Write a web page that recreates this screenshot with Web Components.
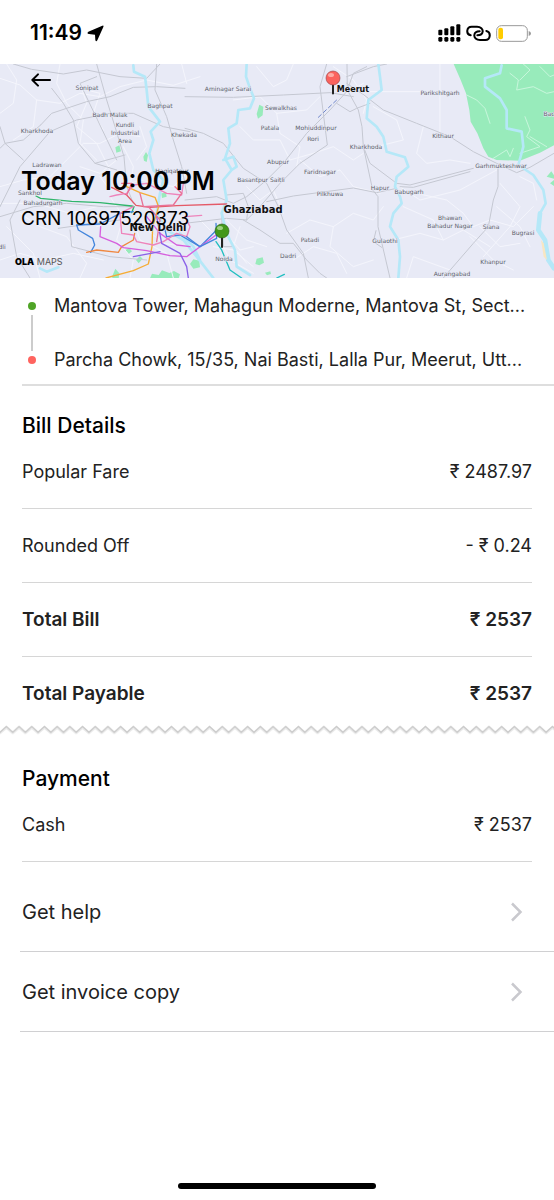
<!DOCTYPE html>
<html lang="en">
<head>
<meta charset="utf-8">
<meta name="viewport" content="width=device-width, initial-scale=1">
<title>Ride details</title>
<style>
  body {
    margin: 0;
    background: #fff;
    color: #222;
    font-family: Inter, "Liberation Sans", sans-serif;
  }
</style>
</head>
<body>
<ride-screen></ride-screen>

<script>
class StatusBar extends HTMLElement {
  constructor() {
    super();
    this.attachShadow({ mode: 'open' });
    this.shadowRoot.innerHTML = `
      <style>
        :host {
          display: flex;
          align-items: center;
          justify-content: space-between;
          height: 64px;
          padding: 2px 23px 0 30px;
          box-sizing: border-box;
          color: #000;
        }
        div { display: flex; align-items: center; gap: 5px; }
        time { font-size: 21px; line-height: 24px; font-weight: 600; }
      </style>
      <div>
        <time>11:49</time>
        <svg width="17" height="17" viewBox="0 0 51 51" aria-hidden="true">
          <path d="M46 2Q51 0 49 6L31 46Q27 52 25 45L24 29L6 27Q-2 25 4 20Z"/>
        </svg>
      </div>
      <div>
        <svg width="23" height="18" viewBox="0 0 69 54" aria-hidden="true">
          <rect x="1" y="17" width="12" height="17" rx="3"/>
          <rect x="19" y="13" width="12" height="21" rx="3"/>
          <rect x="37" y="7" width="12" height="27" rx="3"/>
          <rect x="55" y="1" width="12" height="33" rx="3"/>
          <rect x="1" y="39" width="12" height="14" rx="4"/>
          <rect x="19" y="39" width="12" height="14" rx="4"/>
          <rect x="37" y="39" width="12" height="14" rx="4"/>
          <rect x="55" y="39" width="12" height="14" rx="4"/>
        </svg>
        <svg width="25" height="17" viewBox="0 0 75 51" fill="none" stroke="#000" stroke-width="6" stroke-linecap="round" aria-hidden="true">
          <path d="M14 31C-1 28 1 5 17 5H33C44 5 51 12 50 20C49 28 42 31 34 31"/>
          <path d="M61 18C76 21 74 45 58 45H42C31 45 24 38 25 30C26 22 33 19 41 19"/>
        </svg>
        <svg width="35" height="17" viewBox="0 0 105 51" aria-hidden="true">
          <rect x="2" y="2" width="92" height="47" rx="14" fill="#fff" stroke="#999" stroke-width="3"/>
          <rect x="7" y="8" width="14" height="35" rx="6" fill="#fc0"/>
          <path d="M98 18Q105 20 105 25.500T98 33Z" fill="#999"/>
        </svg>
      </div>
    `;
  }
}
customElements.define('status-bar', StatusBar);

// [x, baseline, text]
const PLACES = [
  [87, 26, 'Sonipat'], [160, 44, 'Baghpat'], [110, 53, 'Badh Malak'],
  [125, 63, 'Kundli'], [125, 71, 'Industrial'], [125, 79, 'Area'],
  [37, 69, 'Kharkhoda'], [184, 73, 'Khekada'], [47, 103, 'Ladrawan'],
  [172, 109, 'Haqiqatpur'], [30, 131, 'Sankhol'], [43, 141, 'Bahadurgarh'],
  [228, 27, 'Aminagar Sarai'], [281, 46, 'Sewalkhas'],
  [270, 66, 'Patala'], [316, 66, 'Mohiuddinpur'], [313, 77, 'Rori'],
  [366, 85, 'Kharkhoda'], [278, 100, 'Abupur'], [320, 110, 'Faridnagar'],
  [261, 118, 'Basantpur Saitli'], [330, 132, 'Pilkhuwa'], [310, 178, 'Patadi'],
  [288, 194, 'Dadri'], [224, 197, 'Noida'], [440, 31, 'Parikshitgarh'],
  [443, 74, 'Kithaur'], [501, 104, 'Garhmukteshwar'], [380, 126, 'Hapur'],
  [409, 130, 'Babugarh'], [450, 156, 'Bhawan'], [450, 164, 'Bahadur Nagar'],
  [491, 165, 'Siana'], [523, 171, 'Bugrasi'], [385, 179, 'Gulaothi'],
  [493, 200, 'Khanpur'], [452, 212, 'Aurangabad'], [549, 52, 'Bac'], [2, 185, 'dli'],
];

class RideMap extends HTMLElement {
  constructor() {
    super();
    this.attachShadow({ mode: 'open' });
    const places = PLACES.map(([x, y, name]) => `<text x="${x}" y="${y}">${name}</text>`).join('');
    this.shadowRoot.innerHTML = `
      <style>
        :host { display: grid; color: #000; }
        .map, .info { grid-area: 1 / 1; }
        .map { display: block; width: 100%; height: auto; }
        .map path { fill: none; stroke-linejoin: round; stroke-linecap: round; }
        .map .park path { fill: #98ebbb; }
        .minor { stroke: #f4f5fc; stroke-width: 3; }
        .road { stroke: #c5c8d2; stroke-width: 3; }
        .water { stroke: #b5e8f8; stroke-width: 8; }
        .metro { stroke-width: 4; }
        .places {
          font-family: "DejaVu Sans", sans-serif;
          font-size: 6px;
          fill: #5c5f6a;
          text-anchor: middle;
          stroke: #e8eaf6;
          stroke-width: 1px;
          paint-order: stroke;
        }
        .places .city { font-size: 10px; font-weight: 700; fill: #111; }
        .places .small { font-size: 8px; }
        .info {
          display: flex;
          flex-direction: column;
          align-items: flex-start;
          padding: 0 22px 11px 21px;
          z-index: 1;
        }
        button {
          display: grid;
          place-items: center;
          width: 40px;
          height: 32px;
          padding: 0;
          border: 0;
          background: none;
          cursor: pointer;
        }
        h1 { margin: 68px 0 0; font-size: 25px; line-height: 34px; font-weight: 600; }
        p { margin: 7px 0 0; font-size: 19px; line-height: 28px; }
        .brand { margin-top: auto; margin-left: -6px; font-size: 9px; line-height: 10px; color: #555; }
        .brand b { color: #000; font-weight: 900; }
      </style>
      <svg class="map" viewBox="0 0 554 214" role="img" aria-label="Route map from Noida to Meerut">
        <rect width="554" height="214" fill="#e8eaf6"/>
        <!-- terrain and roads are drawn at three units to a pixel -->
        <g transform="scale(.33333) translate(0 -12)">
          <g class="park">
            <path d="M1361 12L1382 60L1398 100L1408 150L1412 185L1432 220L1450 265L1465 290L1490 300L1560 302L1620 278L1662 256V12Z"/>
            <path d="M346 262l12-6 5 18-14 4zM430 290l8-14 6 10-4 20-8-4zM770 162l8-28 12 6-2 26-14 10zM376 570l12-6 8 10-10 8zM408 600l12-12 8 8-12 14zM336 650l10-24 12 14-2 16h-18zM450 655l6-14 20 4 10-14 22 8 14-6 18 10-4 12zM570 612l10-14 18 4 2 20-20 4zM770 596l18-4 4 16-14 8-12-4zM795 638l16-4 2 8-12 4zM484 400l14-2 2 12-14 4zM1640 350l14-16 8 12v10zM1650 370l12-10v18z"/>
          </g>
          <g class="minor">
            <path d="M0 55L60 75L110 120L180 130L240 100L300 110L360 80L440 60L520 76L600 50"/>
            <path d="M20 12L50 60L40 130L0 160M110 120L100 200L40 240M180 12L170 70L200 130L250 180L240 250L290 300"/>
            <path d="M0 380L70 360L150 350L200 300L250 250L300 250L360 220L420 230M60 460L120 500L200 530L260 610L240 654"/>
            <path d="M120 654L100 580L20 500M0 600L60 580L130 600L220 580L310 600M0 430L110 430L210 460L290 440"/>
            <path d="M240 70L260 130L230 200L290 250L330 330M260 90L300 100L280 160L310 210M240 320L300 340L350 300"/>
            <path d="M290 500L350 480L430 500L490 550L560 560M330 410L370 470L350 540L400 600L390 654M400 480L420 540L500 580L520 654"/>
            <path d="M300 350L330 390L420 360L520 380L560 340M370 260L400 320L390 380M420 200L440 260L410 300M560 70L545 12"/>
            <path d="M600 480L660 540L690 600L760 640M660 500L720 570L760 560M680 480L740 540L800 560M720 500L700 560L740 610M640 560L700 570L760 620"/>
            <path d="M770 20L820 80L860 60L880 12M700 120L780 110L830 160L920 150L960 110M830 160L840 220L900 260L890 320"/>
            <path d="M720 200L760 240L840 240L870 300L940 280L1000 260L1060 300L1090 280M740 380L780 420L820 390L850 460"/>
            <path d="M900 300L960 350L1020 330L1060 380L1140 400M860 520L930 480L1000 500L1060 460L1120 480L1150 440"/>
            <path d="M880 600L940 560L1010 580L1040 640M1000 500L990 560L1060 620L1120 600M990 60L1040 100L1090 70M1000 20L1060 60L1100 120L1090 160"/>
            <path d="M1110 95L1260 95L1340 100M1320 12V220M1120 140L1190 180L1210 240L1130 260M1270 200L1250 280L1280 310L1350 300L1410 310"/>
            <path d="M1210 440L1300 480L1330 540L1390 510L1470 560M1250 400L1340 420L1390 460L1420 500L1470 480L1540 500L1600 440"/>
            <path d="M1410 530L1480 600L1540 630M1440 500L1500 560L1560 550M1450 590L1530 500L1560 440L1500 370M1220 654L1240 590L1350 630"/>
            <path d="M1560 350L1600 370L1610 420M1490 440L1560 500L1590 560M1180 540L1260 520L1330 540"/>
            <path d="M1200 380L1260 420L1380 390L1490 330"/>
          </g>
          <g class="minor" style="stroke:#c8f6dc">
            <path d="M1400 105L1430 120L1455 145L1470 190M1530 40L1555 60L1550 90L1600 80L1640 100L1662 95M1560 60L1590 30L1570 12M1620 20L1650 50L1662 45M1575 170L1590 210L1580 230L1620 260L1560 280M1480 295L1520 270L1530 290L1540 265M1590 230L1640 260"/>
          </g>
          <g class="road">
            <path d="M40 12L95 28L190 42L260 30L360 50L440 55L480 12M290 12L320 120L345 200L372 290L380 380L400 430"/>
            <path d="M122 195L155 160L260 125L330 110L400 82L470 80L555 85M122 195L70 240L15 250L0 265M155 85L190 130L220 180L235 250L285 310L350 330"/>
            <path d="M0 440L60 320L150 215L230 180L330 160L400 160L490 200L570 215"/>
            <path d="M470 12L465 90L500 170L520 240L545 320L560 400M0 200L15 250L70 300M285 310L375 285M350 300L240 70L290 50"/>
            <path d="M0 470L100 440L200 430L310 440L400 440M90 654L50 590L30 480L60 420M175 505L280 490L360 480M210 510L215 560L330 590L440 600"/>
            <path d="M555 110L700 112L850 105L990 98L1060 110M555 205L610 220L670 250L730 325L800 370L835 440L860 510L910 580L925 654"/>
            <path d="M555 420L650 410L700 430L740 410L800 360L850 310L920 220L990 150L1040 95L1060 40L1100 20M980 12L960 80L975 200L982 255L900 310L840 370L780 440L740 480L680 475L555 490"/>
            <path d="M1010 130L1050 155L1070 145L1110 130M1041 12L1042 90L1075 150L1086 200L1090 260L1118 390L1134 410L1134 500L1170 654"/>
            <path d="M1040 70L1092 105L1150 150L1250 190L1350 230L1420 275L1490 310L1550 338L1590 322L1662 280"/>
            <path d="M1090 260L1110 310L1190 370L1230 375L1420 325M1200 380L1240 382L1410 335M1190 385L1130 398L1060 384L880 408L800 425"/>
            <path d="M1494 320L1494 380L1480 420L1465 500L1420 550L1330 654M730 480L780 510L840 550L880 550L920 600L960 640L980 654M680 405L730 400L745 440L740 480"/>
            <path d="M1128 512L1120 545L1145 562M665 470L670 560L695 560M1040 50L1120 20L1160 12"/>
          </g>
          <g class="water">
            <path d="M400 16L402 35L435 50L440 90L445 140L480 185L452 215L460 240L448 280L460 330L490 360L480 400L470 460L500 510L550 540L590 590L640 654"/>
            <path d="M740 12L738 50L750 85L762 115L750 145L715 150L710 190L685 205L690 250L675 295L695 330L710 320L700 290L670 300M695 330L670 360L680 420L665 460L680 520L705 570L710 620L750 645"/>
            <path d="M1135 12L1140 50L1145 90L1105 120L1100 175L1130 200L1150 230L1160 275L1215 292L1225 320L1190 350L1185 380L1200 410L1205 430L1180 460L1170 500L1195 540L1200 590L1195 654"/>
            <path d="M1505 16L1500 40L1455 55L1455 80L1500 115L1520 150L1520 205L1565 215L1570 260L1555 315L1600 345L1630 390L1637 430L1620 460"/>
            <path d="M1620 460L1615 510L1635 540L1645 600L1662 625" stroke-width="14"/>
            <path d="M120 625L140 635L175 622M540 520L580 560L600 600" stroke-width="8"/>
          </g>
          <path d="M1623 540l8 10 10 50-10-10z" style="fill:#f8e6c2"/>
          <g class="metro">
            <path stroke="#31b56b" d="M108 408L122 415L215 424L300 428L395 438L402 440L395 458"/>
            <path stroke="#e45a68" d="M335 382L380 405L408 436L450 442L530 437L680 432"/>
            <path stroke="#f5ac35" d="M372 355L380 380L420 398L465 412L476 440L458 500L456 560L445 612L400 632L318 654"/>
            <path stroke="#4385dc" d="M230 495L235 510L278 535L284 555L272 577M230 495L300 492L360 460L400 455M490 490L500 530L540 525L600 560L655 505"/>
            <path stroke="#ef8740" d="M260 577L290 570L355 577L365 560L400 540L404 520"/>
            <path stroke="#d65fdd" d="M302 500L300 530L350 550L370 563L440 572L510 587L560 590L600 560L655 520M440 470L480 520L530 555L570 560"/>
            <path stroke="#ee84bb" d="M330 410L350 405L380 400L400 375L440 370L500 400L545 405L550 370M400 440L360 460L365 520L400 525L410 545L460 555L490 545L530 520L560 530L570 500L555 470L605 466"/>
            <path stroke="#8a61e8" d="M470 470L485 550L540 580L560 620L565 654M400 590L480 575"/>
            <path stroke="#e97196" d="M420 400L430 440L520 435L545 400L525 380M445 440L480 480L470 545M380 405L395 370L365 370"/>
            <path stroke="#4385dc" d="M648 490L650 535L600 560L560 530"/>
            <path stroke="#21bfc0" d="M648 545L665 570L690 630L725 654M830 654L853 643"/>
            <path stroke="#7087ca" stroke-width="3" stroke-dasharray="12 9" d="M955 172L1010 120"/>
          </g>
        </g>
        <g class="places">
          ${places}
          <text class="city small" x="353" y="28">Meerut</text>
          <text class="city" x="253" y="149">Ghaziabad</text>
          <text class="city" x="158" y="167">New Delhi</text>
        </g>
        <g stroke="#222">
          <path d="M333 18v11.500M222 171v12" stroke-width="2"/>
          <circle cx="333" cy="14" r="7" fill="#fb625d" stroke="#963f43" stroke-width=".6"/>
          <circle cx="222" cy="167" r="7" fill="#43981b" stroke="#245b12" stroke-width=".6"/>
        </g>
        <ellipse cx="331" cy="11" rx="3" ry="2" fill="#fdaaa3"/>
        <ellipse cx="220" cy="164" rx="3" ry="2" fill="#9ed181"/>
      </svg>
      <div class="info">
        <button type="button" aria-label="Back">
          <svg width="20" height="14" viewBox="0 0 60 42" fill="none" stroke="#000" stroke-width="6" stroke-linecap="round" stroke-linejoin="round" aria-hidden="true">
            <path d="M57 21H4M21 4L4 21L21 38"/>
          </svg>
        </button>
        <h1><slot name="time"></slot></h1>
        <p><slot name="crn"></slot></p>
        <div class="brand"><b>OLA</b> MAPS</div>
      </div>
    `;
  }
}
customElements.define('ride-map', RideMap);

class RouteStop extends HTMLElement {
  constructor() {
    super();
    this.attachShadow({ mode: 'open' });
    this.shadowRoot.innerHTML = `
      <style>
        :host {
          display: grid;
          grid-template-columns: 20px minmax(0, 1fr);
          column-gap: 12px;
          align-items: center;
          font-size: 18px;
          line-height: 26px;
        }
        i {
          width: 8px;
          height: 8px;
          border-radius: 50%;
          background: var(--dot);
          justify-self: center;
        }
        span { overflow: hidden; white-space: nowrap; text-overflow: ellipsis; }
      </style>
      <i></i><span><slot></slot></span>
    `;
  }
}
customElements.define('route-stop', RouteStop);

class BillSection extends HTMLElement {
  constructor() {
    super();
    this.attachShadow({ mode: 'open' });
    this.shadowRoot.innerHTML = `
      <style>
        :host { display: block; padding: 27px 22px 0; }
        h2 { margin: 0; font-size: 21px; line-height: 26px; font-weight: 500; color: #000; }
        .rows { display: grid; gap: 4px; }
      </style>
      <h2><slot name="title"></slot></h2>
      <div class="rows"><slot></slot></div>
    `;
  }
}
customElements.define('bill-section', BillSection);

class BillRow extends HTMLElement {
  constructor() {
    super();
    this.attachShadow({ mode: 'open' });
    this.shadowRoot.innerHTML = `
      <style>
        :host {
          display: flex;
          justify-content: space-between;
          padding: 21px 0 24px;
          border-bottom: 1px solid #d6d6d6;
          font-size: 18px;
          line-height: 24px;
        }
        :host([total]) { font-size: 19px; font-weight: 600; }
        :host([last]) { padding-bottom: 19px; border-bottom: 0; }
      </style>
      <span><slot></slot></span>
      <span><slot name="amount"></slot></span>
    `;
  }
}
customElements.define('bill-row', BillRow);

class TornEdge extends HTMLElement {
  constructor() {
    super();
    this.attachShadow({ mode: 'open' });
    this.shadowRoot.innerHTML = `
      <style>
        :host { display: block; height: 14px; }
        svg { display: block; width: 100%; height: 100%; }
      </style>
      <svg aria-hidden="true">
        <defs>
          <pattern id="teeth" width="12.7" height="14" patternUnits="userSpaceOnUse">
            <path d="M-1 9L0 8.500L6.350 3L12.700 8.500L13.700 9" fill="none" stroke="#ececec" stroke-width="2"/>
            <path d="M-1 6.500L0 7.300L6.350 1.500L12.700 7.300L13.700 6.500" fill="none" stroke="#cbcbcb" stroke-width="1.500"/>
          </pattern>
        </defs>
        <rect width="100%" height="14" fill="url(#teeth)"/>
      </svg>
    `;
  }
}
customElements.define('torn-edge', TornEdge);

class ActionLink extends HTMLElement {
  constructor() {
    super();
    this.attachShadow({ mode: 'open' });
    this.shadowRoot.innerHTML = `
      <style>
        :host { display: block; border-bottom: 1px solid #d0d0d2; }
        a {
          display: flex;
          align-items: center;
          justify-content: space-between;
          height: 79px;
          padding: 0 31px 0 2px;
          font-size: 20px;
          line-height: 26px;
          color: inherit;
          text-decoration: none;
        }
      </style>
      <a>
        <slot></slot>
        <svg width="13" height="20" viewBox="0 0 13 20" fill="none" stroke="#c9c9ce" stroke-width="2.500" aria-hidden="true">
          <path d="M2 1.500L10.500 10L2 18.500"/>
        </svg>
      </a>
    `;
  }

  connectedCallback() {
    this.shadowRoot.querySelector('a').href = this.getAttribute('href') ?? '#';
  }
}
customElements.define('action-link', ActionLink);

class RideScreen extends HTMLElement {
  constructor() {
    super();
    this.attachShadow({ mode: 'open' });
    this.shadowRoot.innerHTML = `
      <style>
        :host { display: flex; flex-direction: column; min-height: 100vh; }
        .route {
          display: grid;
          grid-template-rows: 26px 10px 26px;
          gap: 9px;
          margin-left: 22px;
          padding: 15px 22px 11px 0;
          border-bottom: 2px solid #dedede;
        }
        .track { align-self: center; width: 2px; height: 36px; margin: -13px 0 -13px 9px; background: #ccc; }
        nav { margin-left: 20px; padding-top: 10px; }
        footer { display: grid; justify-items: center; margin-top: auto; padding: 20px 0 11px; }
        footer i { width: 198px; height: 6px; border-radius: 3px; background: #000; }
      </style>
      <status-bar></status-bar>
      <main>
        <ride-map>
          <span slot="time">Today 10:00 PM</span>
          <span slot="crn">CRN 10697520373</span>
        </ride-map>
        <div class="route">
          <route-stop style="--dot:#4fa426">Mantova Tower, Mahagun Moderne, Mantova St, Sect...</route-stop>
          <div class="track"></div>
          <route-stop style="--dot:#ff645f">Parcha Chowk, 15/35, Nai Basti, Lalla Pur, Meerut, Utt...</route-stop>
        </div>
        <bill-section>
          <span slot="title">Bill Details</span>
          <bill-row>Popular Fare<span slot="amount">₹ 2487.97</span></bill-row>
          <bill-row>Rounded Off<span slot="amount">- ₹ 0.24</span></bill-row>
          <bill-row total>Total Bill<span slot="amount">₹ 2537</span></bill-row>
          <bill-row total last>Total Payable<span slot="amount">₹ 2537</span></bill-row>
        </bill-section>
        <torn-edge></torn-edge>
        <bill-section>
          <span slot="title">Payment</span>
          <bill-row>Cash<span slot="amount">₹ 2537</span></bill-row>
        </bill-section>
        <nav>
          <action-link href="#help">Get help</action-link>
          <action-link href="#invoice">Get invoice copy</action-link>
        </nav>
      </main>
      <footer><i></i></footer>
    `;
  }
}
customElements.define('ride-screen', RideScreen);
</script>
</body>
</html>
